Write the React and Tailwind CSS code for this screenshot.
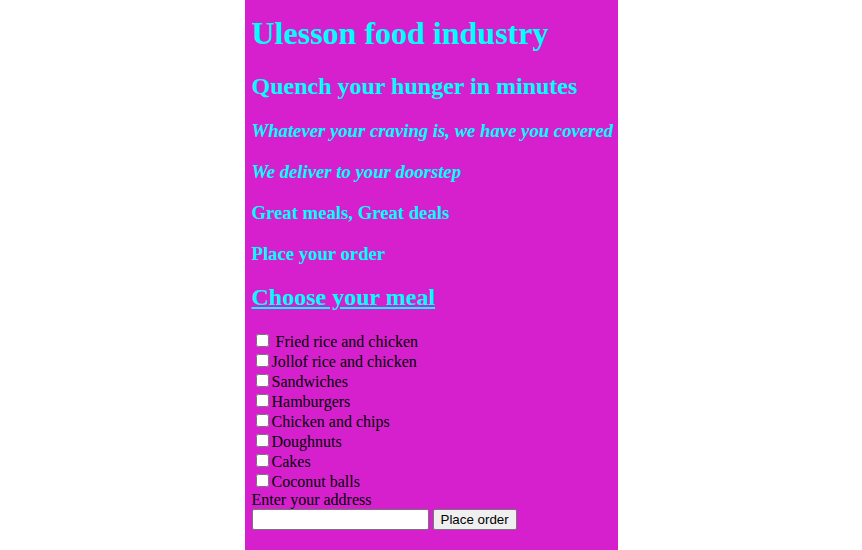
const meals = [
  " Fried rice and chicken",
  "Jollof rice and chicken",
  "Sandwiches",
  "Hamburgers",
  "Chicken and chips",
  "Doughnuts",
  "Cakes",
  "Coconut balls",
];

export default function App() {
  return (
    <div className="bg-white min-h-[550px] font-['Liberation_Serif',serif] leading-[normal] text-black">
      <div className="w-[373px] mx-auto bg-[#d620ce] min-h-[550px] pl-[7px] pt-[15px]">
        <h1 className="text-[32px] font-bold text-[#00ffff] mb-[21.44px]">
          Ulesson food industry
        </h1>
        <h2 className="text-[24px] font-bold text-[#00ffff] mb-[19.92px]">
          Quench your hunger in minutes
        </h2>
        <h3 className="text-[18.72px] font-bold italic text-[#00ffff] mb-[18.72px] whitespace-nowrap">
          Whatever your craving is, we have you covered
        </h3>
        <h3 className="text-[18.72px] font-bold italic text-[#00ffff] mb-[18.72px]">
          We deliver to your doorstep
        </h3>
        <h3 className="text-[18.72px] font-bold text-[#00ffff] mb-[18.72px]">
          Great meals, Great deals
        </h3>
        <h3 className="text-[18.72px] font-bold text-[#00ffff] mb-[19.92px]">
          Place your order
        </h3>
        <h2 className="text-[24px] font-bold text-[#00ffff] underline mb-[19.92px]">
          Choose your meal
        </h2>
        <form className="text-[16px]">
          {meals.map((meal) => (
            <div key={meal}>
              <input type="checkbox" className="m-[3px_3px_3px_4px] align-baseline" />
              <span className="whitespace-pre">{meal}</span>
            </div>
          ))}
          <div>Enter your address</div>
          <div className="flex items-center gap-[4px]">
            <input
              type="text"
              className="w-[177px] h-[21px] bg-white border border-[#767676] rounded-[2px] px-[2px] text-[13.33px]"
            />
            <button
              type="button"
              className="h-[21px] px-[7px] bg-[#efefef] border border-[#767676] rounded-[2px] text-[13.33px] font-['Liberation_Sans',Arial,sans-serif] text-black"
            >
              Place order
            </button>
          </div>
        </form>
      </div>
    </div>
  );
}
